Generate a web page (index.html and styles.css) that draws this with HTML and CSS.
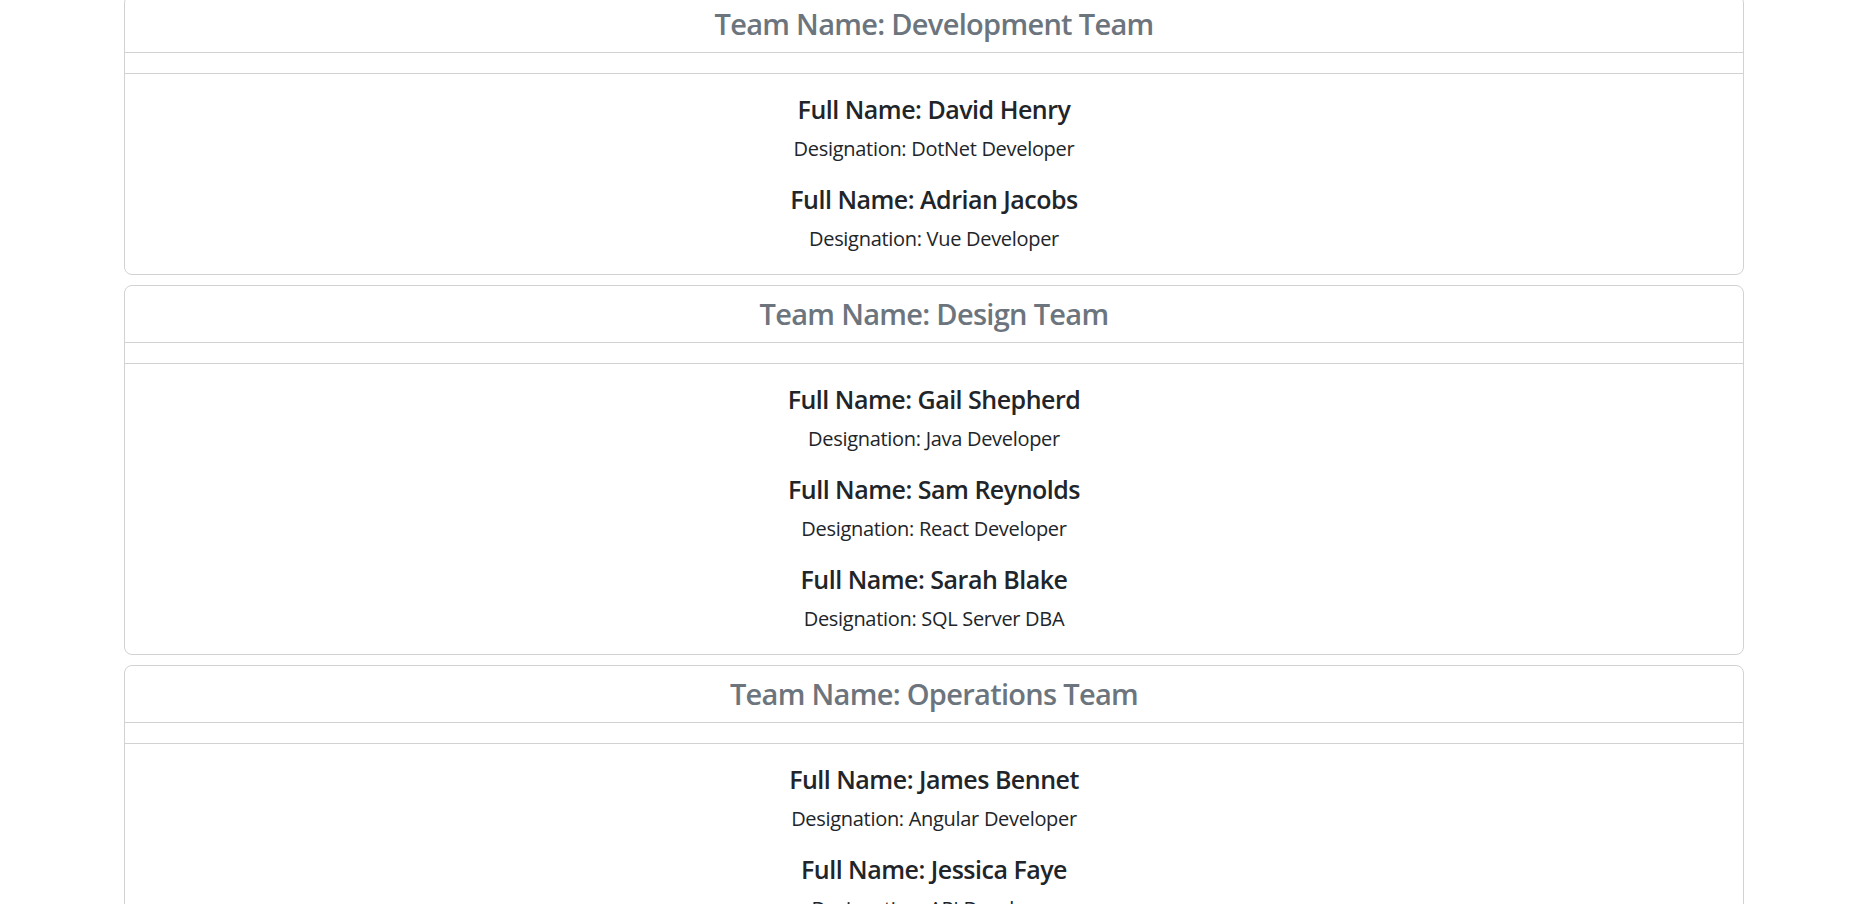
FILE: index.html
```html
<!DOCTYPE html>
<html lang="en">
<head>
<meta charset="utf-8">
<title>Teams</title>
<link rel="stylesheet" href="styles.css">
</head>
<body>
<main class="container">
  <section class="card">
    <header class="card-header"><h4 class="team-title">Team Name: Development Team</h4></header>
    <div class="card-spacer"></div>
    <div class="card-body">
      <div class="member"><h5 class="member-name">Full Name: David Henry</h5><p class="member-role">Designation: DotNet Developer</p></div>
      <div class="member"><h5 class="member-name">Full Name: Adrian Jacobs</h5><p class="member-role">Designation: Vue Developer</p></div>
    </div>
  </section>
  <section class="card">
    <header class="card-header"><h4 class="team-title">Team Name: Design Team</h4></header>
    <div class="card-spacer"></div>
    <div class="card-body">
      <div class="member"><h5 class="member-name">Full Name: Gail Shepherd</h5><p class="member-role">Designation: Java Developer</p></div>
      <div class="member"><h5 class="member-name">Full Name: Sam Reynolds</h5><p class="member-role">Designation: React Developer</p></div>
      <div class="member"><h5 class="member-name">Full Name: Sarah Blake</h5><p class="member-role">Designation: SQL Server DBA</p></div>
    </div>
  </section>
  <section class="card">
    <header class="card-header"><h4 class="team-title">Team Name: Operations Team</h4></header>
    <div class="card-spacer"></div>
    <div class="card-body">
      <div class="member"><h5 class="member-name">Full Name: James Bennet</h5><p class="member-role">Designation: Angular Developer</p></div>
      <div class="member"><h5 class="member-name">Full Name: Jessica Faye</h5><p class="member-role">Designation: API Developer</p></div>
    </div>
  </section>
</main>
</body>
</html>
```
FILE: styles.css
```css
html, body {
  margin: 0;
  padding: 0;
  overflow: hidden;
  background: #fff;
}
body {
  font-family: "Open Sans", "Noto Sans", sans-serif;
  color: #212529;
}
.container {
  width: 1620px;
  margin: -5px auto 0;
  display: flex;
  flex-direction: column;
  gap: 10px;
}
.card {
  border: 1px solid #d2d2d2;
  border-radius: 8px;
  background: #fff;
  text-align: center;
}
.card-header {
  padding: 10px 20px;
  border-bottom: 1px solid #d2d2d2;
}
.team-title {
  margin: 0;
  font-size: 29px;
  line-height: 36px;
  font-weight: 600;
  letter-spacing: -0.7px;
  color: #6c757d;
}
.card-spacer {
  height: 20px;
  border-bottom: 1px solid #d2d2d2;
}
.card-body {
  padding: 20px 20px 0;
}
.member-name {
  margin: 0 0 10px;
  font-size: 25px;
  line-height: 30px;
  font-weight: 600;
  letter-spacing: -0.5px;
  color: #212529;
}
.member-role {
  margin: 0 0 20px;
  font-size: 20px;
  line-height: 30px;
  letter-spacing: -0.3px;
  color: #212529;
}
```
